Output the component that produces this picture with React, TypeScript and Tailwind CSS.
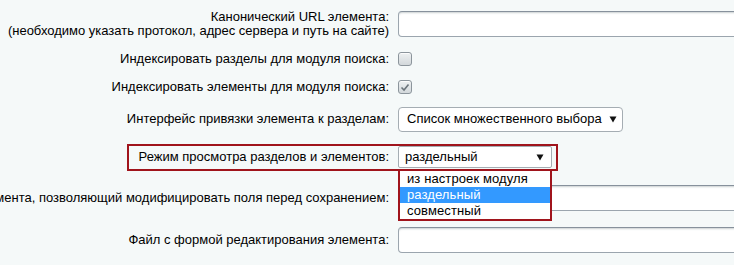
import React from "react";

const labelCls =
  "w-[389px] shrink-0 flex justify-end text-right text-[13px] leading-[14px] text-[#000]";

function TextInput() {
  return (
    <div className="h-[26px] w-[420px] shrink-0 rounded-[4px] border border-[#9ba5ae] border-t-[#87919c] bg-white shadow-[inset_0_2px_2px_-1px_rgba(180,188,191,0.7)]" />
  );
}

function Checkbox({ checked }: { checked?: boolean }) {
  return (
    <div className="flex h-[14px] w-[14px] items-center justify-center rounded-[3px] border border-[#8c959c] bg-gradient-to-b from-[#eef1f2] to-[#d3d8db] shadow-[inset_0_1px_0_rgba(255,255,255,0.8)]">
      {checked && (
        <svg width="10" height="9" viewBox="0 0 10 9">
          <path d="M1.5 4.5 L4 7 L8.5 1.5" fill="none" stroke="#6b747b" strokeWidth="1.6" />
        </svg>
      )}
    </div>
  );
}

function Arrow() {
  return (
    <svg width="8" height="7" viewBox="0 0 8 7" className="shrink-0">
      <path d="M0.5 0.5 H7.5 L4 6.5 Z" fill="#111" />
    </svg>
  );
}

function Row({
  label,
  children,
  className,
}: {
  label: React.ReactNode;
  children: React.ReactNode;
  className: string;
}) {
  return (
    <div className={`flex items-center ${className}`}>
      <div className={labelCls}>
        <span className="shrink-0 whitespace-nowrap">{label}</span>
      </div>
      <div className="flex pl-[9px]">{children}</div>
    </div>
  );
}

export default function App() {
  const options = ["из настроек модуля", "раздельный", "совместный"];
  return (
    <div className="relative h-[265px] w-[734px] overflow-hidden bg-[#f5f9f9] font-['Liberation_Sans',Arial,sans-serif]">
      <Row
        className="h-[48px]"
        label={
          <>
            Канонический URL элемента:
            <br />
            (необходимо указать протокол, адрес сервера и путь на сайте)
          </>
        }
      >
        <TextInput />
      </Row>
      <Row className="h-[22px]" label="Индексировать разделы для модуля поиска:">
        <Checkbox />
      </Row>
      <Row className="h-[34px]" label="Индексировать элементы для модуля поиска:">
        <Checkbox checked />
      </Row>
      <Row className="h-[30px]" label="Интерфейс привязки элемента к разделам:">
        <div className="flex h-[25px] w-[225px] items-center justify-between rounded-[4px] border border-[#a5adb3] bg-white pl-[8px] pr-[5px] text-[13px] text-[#000]">
          <span>Список множественного выбора</span>
          <Arrow />
        </div>
      </Row>
      <Row className="h-[46px]" label="Режим просмотра разделов и элементов:">
        <div className="flex h-[22px] w-[154px] items-center justify-between rounded-[2px] border border-[#a5adb3] bg-white pl-[6px] pr-[7px] text-[13px] text-[#000]">
          <span>раздельный</span>
          <Arrow />
        </div>
      </Row>
      <Row
        className="h-[36px]"
        label="Код файла с функцией обработки элемента, позволяющий модифицировать поля перед сохранением:"
      >
        <TextInput />
      </Row>
      <Row className="h-[48px]" label="Файл с формой редактирования элемента:">
        <TextInput />
      </Row>

      {/* red highlight around the field */}
      <div className="pointer-events-none absolute left-[127px] top-[144px] h-[27px] w-[431px] border-2 border-[#a0141c]" />

      {/* open dropdown list */}
      <div className="absolute left-[398px] top-[169px] w-[154px] border-2 border-[#a0141c] bg-white text-[13px] tracking-[0.1px]">
        {options.map((o, i) => (
          <div
            key={o}
            className={`h-[16px] pl-[7px] leading-[16px] ${
              i === 1 ? "bg-[#3399ff] text-white" : "text-[#000]"
            }`}
          >
            {o}
          </div>
        ))}
      </div>
    </div>
  );
}
